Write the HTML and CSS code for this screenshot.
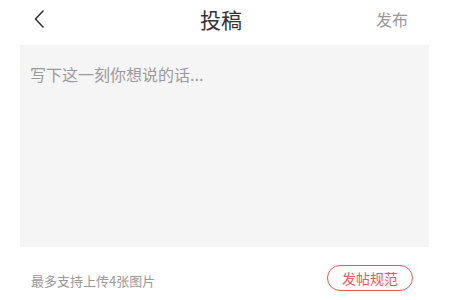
FILE: index.html
```html
<!DOCTYPE html>
<html lang="zh-CN">
<head>
    <meta charset="UTF-8">
    <meta name="viewport" content="width=device-width, initial-scale=1.0">
    <title>投稿</title>
    <link rel="stylesheet" href="styles.css">
</head>
<body>
    <div class="header">
        <div class="back">
            <svg width="10" height="18" viewBox="0 0 10 18">
                <path d="M9 1 L1.5 9 L9 17" fill="none" stroke="#333" stroke-width="1.6" stroke-linecap="round" stroke-linejoin="round"/>
            </svg>
        </div>
        <div class="title">投稿</div>
        <div class="publish">发布</div>
    </div>

    <div class="editor">
        <textarea class="content" placeholder="写下这一刻你想说的话..."></textarea>
    </div>

    <div class="footer">
        <span class="tip">最多支持上传4张图片</span>
        <button class="rules">发帖规范</button>
    </div>
</body>
</html>
```

FILE: styles.css
```css
body {
    margin: 0;
    background-color: #fff;
    font-family: "Noto Sans CJK SC", "Noto Sans", sans-serif;
}

.header {
    display: grid;
    grid-template-columns: 1fr auto 1fr;
    align-items: center;
    height: 38px;
    padding: 0 42px 0 34px;
}

.back {
    display: flex;
    align-items: center;
}

.title {
    font-size: 21px;
    color: #333;
}

.publish {
    justify-self: end;
    font-size: 16px;
    color: #999;
}

.editor {
    margin: 7px 21px 0 20px;
    height: 202px;
    background-color: #f5f5f5;
}

.content {
    display: block;
    box-sizing: border-box;
    width: 100%;
    height: 100%;
    padding: 17px 10px;
    border: none;
    outline: none;
    resize: none;
    background: transparent;
    font-family: inherit;
    font-size: 16px;
    line-height: 24px;
    color: #333;
}

.content::placeholder {
    color: #9a9a9a;
}

.footer {
    display: flex;
    justify-content: space-between;
    align-items: center;
    margin-top: 18px;
    padding: 0 37px 0 31px;
}

.tip {
    font-size: 13px;
    color: #999;
    padding-top: 5px;
}

.rules {
    height: 26px;
    padding: 0 14px;
    border: 1px solid #e8585a;
    border-radius: 13px;
    background: #fff;
    color: #e8585a;
    font-family: inherit;
    font-size: 14px;
    line-height: 24px;
}
```
